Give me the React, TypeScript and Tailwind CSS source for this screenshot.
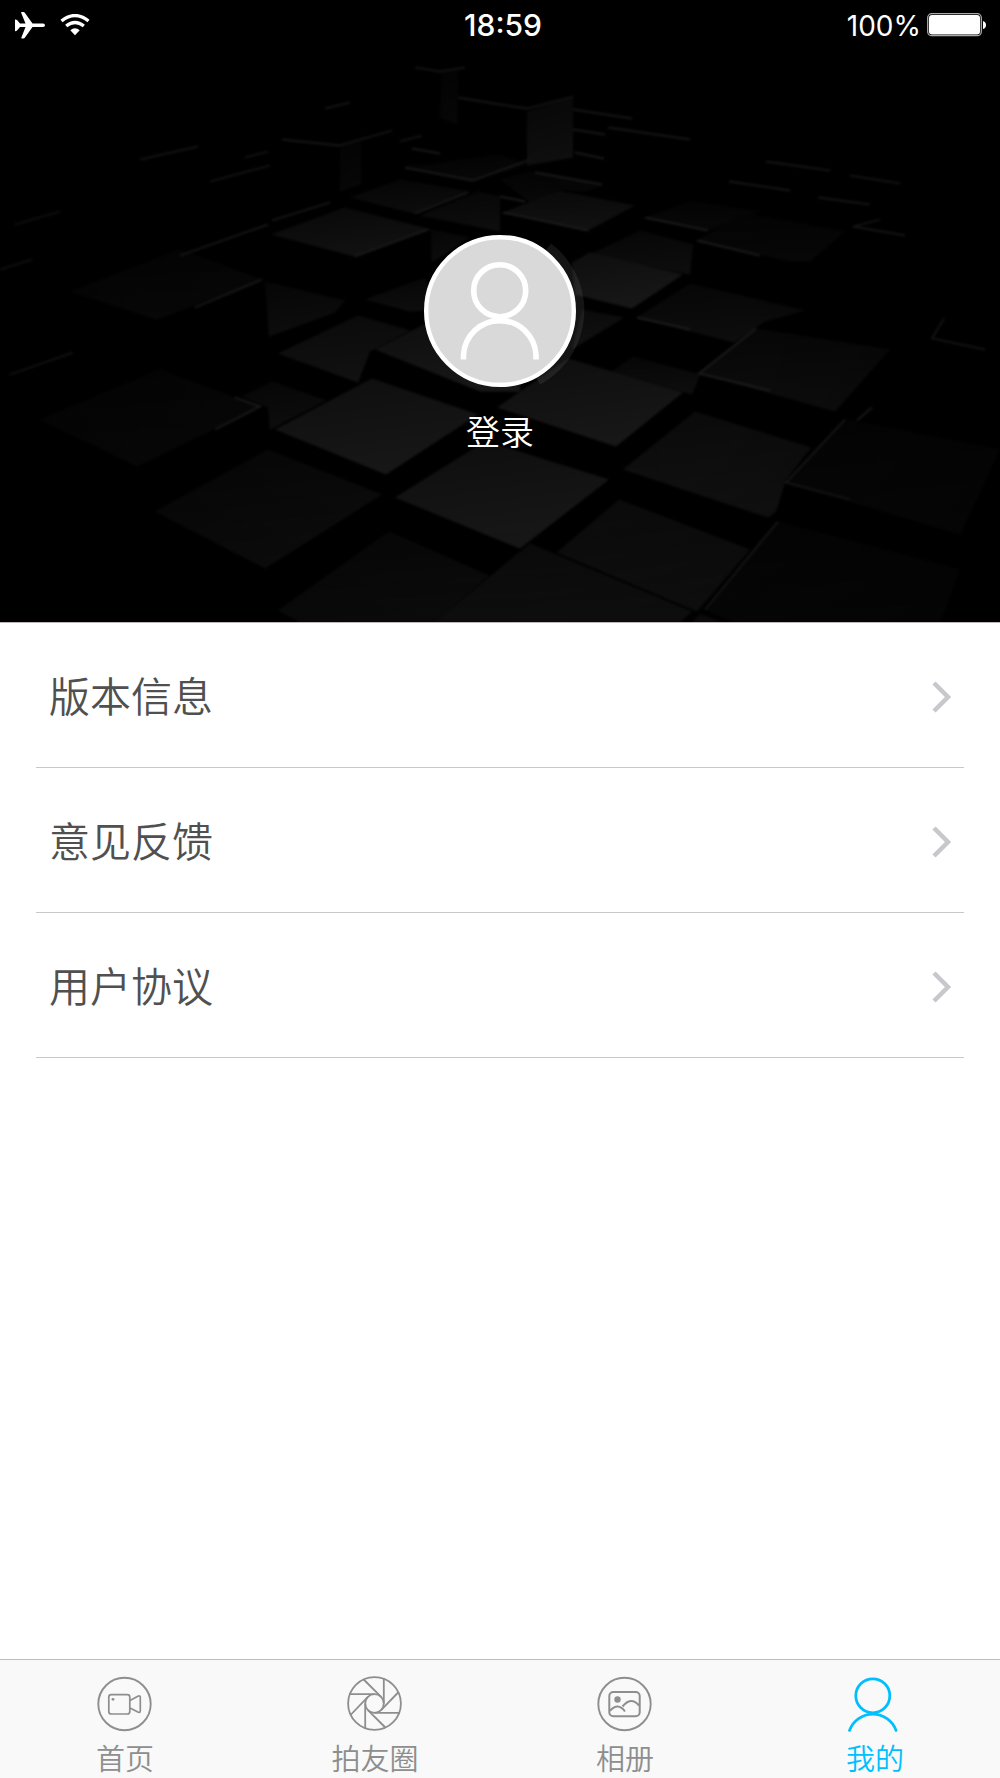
import React, { useState } from 'react';

type TabId = 'home' | 'circle' | 'album' | 'mine';

// Top faces of the blocks behind the avatar: points and tone
const tiles: [string, string][] = [
  ['160,370 260,407 137,467 40,420', 'faint'],
  ['268,450 382,495 265,569 155,512', 'dim'],
  ['372,379 478,415 386,475 275,430', 'bright'],
  ['358,316 410,331 370,352 358,383 278,354', 'mid'],
  ['375,350 424,325 520,325 520,392 480,392', 'bright'],
  ['272,382 326,401 270,430 268,408 242,397', 'dim'],
  ['389,532 489,576 434,623 300,623 278,611', 'dim'],
  ['480,445 500,446 609,480 520,549 395,498', 'bright'],
  ['265,282 345,301 335,313 269,337', 'dim'],
  ['345,208 431,230 355,257 271,235', 'mid'],
  ['180,250 262,280 157,320 70,292', 'faint'],
  ['400,180 470,192 415,214 350,198', 'dim'],
  ['430,165 500,155 527,165 473,181 405,166', 'faint'],
  ['478,192 500,197 500,232 420,216', 'dim'],
  ['365,300 425,278 440,310 410,312', 'dim'],
  ['431,230 470,238 432,263', 'dim'],
  ['527,112 573,97 573,158 527,166', 'mid'],
  ['440,118 442,70 458,68 457,125', 'faint'],
  ['340,146 361,142 361,185 340,192', 'faint'],
  ['500,180 530,172 603,186 585,192 558,190 530,203', 'faint'],
  ['558,191 635,206 588,231 503,213', 'mid'],
  ['645,218 690,202 760,212 708,231', 'faint'],
  ['640,231 693,245 690,275 590,255', 'dim'],
  ['590,253 683,275 632,309 575,295 572,263', 'bright'],
  ['697,241 745,214 845,232 810,262 790,262', 'faint'],
  ['690,284 805,311 765,322 734,343 637,318', 'dim'],
  ['756,329 890,350 835,412 699,374', 'dim'],
  ['633,357 700,375 692,395 612,372', 'dim'],
  ['568,359 683,393 616,447 497,408', 'bright'],
  ['695,412 811,448 786,480 776,512 768,518 623,470', 'mid'],
  ['845,420 1000,450 960,535 786,483', 'faint'],
  ['619,500 750,550 697,612 557,553', 'mid'],
  ['530,544 692,612 680,623 434,623', 'mid'],
  ['778,522 960,570 940,623 735,623 705,610', 'faint'],
  ['582,310 624,318 572,350', 'mid'],
  ['700,614 722,623 692,623', 'mid'],
];

// Lit rims of the blocks
const edges = [
  'M415 68 440 72 465 68',
  'M282 140 339 146 392 131',
  'M140 160 198 147',
  'M210 182 270 166',
  'M245 158 268 152',
  'M325 109 350 103',
  'M15 225 60 212',
  'M0 270 32 260',
  'M10 375 73 353',
  'M180 256 268 225',
  'M272 221 330 203',
  'M195 308 262 280',
  'M215 430 260 407 235 398',
  'M355 257 428 230',
  'M415 214 468 193',
  'M405 168 473 181 500 171 530 160',
  'M400 142 422 136',
  'M412 149 440 154',
  'M458 98 500 105 527 109 573 97',
  'M573 130 605 135',
  'M573 110 632 119',
  'M608 128 690 140',
  'M575 153 604 159',
  'M535 173 602 185',
  'M500 197 525 202',
  'M503 213 588 231',
  'M645 218 708 231',
  'M697 241 760 256',
  'M729 182 790 191',
  'M766 162 830 171',
  'M818 198 870 205',
  'M850 176 900 184',
  'M880 220 853 227 905 236',
  'M944 319 932 339 985 350',
  'M637 318 690 330',
  'M756 329 699 374 770 391',
  'M845 420 786 483 850 500',
  'M778 522 705 610',
  'M872 408 857 421',
];

const BlocksBackdrop = () => (
  <svg
    className="absolute inset-0 h-full w-full"
    viewBox="0 0 1000 623"
    preserveAspectRatio="xMidYMid slice"
    aria-hidden="true"
  >
    <defs>
      <linearGradient id="bright" x1="0" y1="0" x2="0.3" y2="1">
        <stop offset="0" stopColor="#0e0e0e" />
        <stop offset="1" stopColor="#171717" />
      </linearGradient>
      <linearGradient id="mid" x1="0" y1="0" x2="0.2" y2="1">
        <stop offset="0" stopColor="#0a0a0a" />
        <stop offset="1" stopColor="#111" />
      </linearGradient>
      <linearGradient id="dim" x1="0" y1="0" x2="0.2" y2="1">
        <stop offset="0" stopColor="#060606" />
        <stop offset="1" stopColor="#0d0d0d" />
      </linearGradient>
      <linearGradient id="faint" x1="0" y1="0" x2="0.2" y2="1">
        <stop offset="0" stopColor="#040404" />
        <stop offset="1" stopColor="#080808" />
      </linearGradient>
      <radialGradient id="vignette" cx="0.5" cy="0.6" r="0.6">
        <stop offset="0.4" stopColor="#000" stopOpacity="0" />
        <stop offset="1" stopColor="#000" stopOpacity="0.5" />
      </radialGradient>
      <filter id="soft" colorInterpolationFilters="sRGB">
        <feGaussianBlur stdDeviation="0.8" />
      </filter>
    </defs>
    <g filter="url(#soft)">
      {tiles.map(([points, tone]) => (
        <polygon key={points} points={points} fill={`url(#${tone})`} />
      ))}
      {edges.map((d) => (
        <path key={d} d={d} fill="none" stroke="#1c1c1c" strokeWidth="1.8" />
      ))}
    </g>
    <rect width="1000" height="623" fill="url(#vignette)" />
    <path d="M500 311 551 244A84 84 0 0 1 540 385Z" fill="#fff" fillOpacity="0.08" />
  </svg>
);

const PlaneIcon = () => (
  <svg width="30" height="27" viewBox="0 0 30 27" fill="#fff" aria-hidden="true">
    <path d="M6 .5Q6 0 7 0H8.500Q9.300 0 9.800 .8L17.500 11.400H28Q30 11.600 30 13.300T28 15.100H17.500L9.800 25.800Q9.300 26.500 8.500 26.500H7Q6 26.500 6.300 25.700L10.500 14.900H5L2 18.600Q.9 19.400 0 19V7.600Q.9 7.200 2 8L5 11.600H10.500Z" />
  </svg>
);

const WifiIcon = () => (
  <svg width="30" height="22" viewBox="0 0 30 22" fill="none" stroke="#fff" aria-hidden="true">
    <path d="M1.500 7Q15 -3.800 28.500 7" strokeWidth="3.400" />
    <path d="M6.200 12Q15 4.800 23.800 12" strokeWidth="3.400" />
    <path d="M10.300 16.300Q15 12.300 19.700 16.300L15 21.300Z" fill="#fff" stroke="none" />
  </svg>
);

const BatteryIcon = () => (
  <svg width="60" height="24" viewBox="0 0 60 24" aria-hidden="true">
    <rect x=".7" y=".7" width="53.600" height="22" rx="4" fill="none" stroke="#aaa" strokeWidth="1.300" />
    <rect x="2" y="2" width="51" height="19.500" rx="3" fill="#fff" />
    <path d="M56 8Q59 9 59 12T56 16Z" fill="#fff" />
  </svg>
);

const HomeIcon = () => (
  <svg width="56" height="56" viewBox="0 0 56 56" fill="none" stroke="currentColor" aria-hidden="true">
    <circle cx="27.500" cy="28" r="26.200" strokeWidth="1.900" />
    <rect x="11.800" y="18.600" width="21" height="19.400" rx="2.500" strokeWidth="1.700" />
    <path d="M33 24.500 40.800 20.300Q43.300 19.200 43.300 21.300V34.700Q43.300 37.200 40.800 36L33 32" strokeWidth="1.700" />
    <circle cx="16" cy="23.300" r="1.400" fill="currentColor" stroke="none" />
  </svg>
);

const ApertureIcon = () => (
  <svg width="56" height="56" viewBox="0 0 56 56" fill="none" stroke="currentColor" strokeWidth="1.800" aria-hidden="true">
    <circle cx="27.500" cy="27.500" r="26.400" />
    <circle cx="27.500" cy="27.500" r="9.300" />
    <path d="M36.800 27.500V2.800M34.100 34.100 51.100 16.500M27.500 36.800H52M20.900 34.100 38.300 51.500M18.200 27.500V52.200M20.900 20.900 4 38.500M27.500 18.200H3M34.100 20.900 16.700 3.500" />
  </svg>
);

const AlbumIcon = () => (
  <svg width="56" height="56" viewBox="0 0 56 56" fill="none" stroke="currentColor" aria-hidden="true">
    <circle cx="27.500" cy="28" r="26.200" strokeWidth="1.900" />
    <rect x="12.300" y="16" width="30.400" height="24.300" rx="4" strokeWidth="2" />
    <circle cx="20.500" cy="23.500" r="3.200" fill="currentColor" stroke="none" />
    <path d="M13 34.800Q21 26 28 35.500M25.500 30.500Q34 20 42 29.500" strokeWidth="2" />
  </svg>
);

const MineIcon = () => (
  <svg width="56" height="56" viewBox="0 0 56 56" fill="none" stroke="currentColor" strokeWidth="2.800" strokeLinecap="round" aria-hidden="true">
    <circle cx="25.800" cy="19.800" r="17" />
    <path d="M2.500 54.400A24.800 24.800 0 0 1 49.100 54.400" />
  </svg>
);

const menu = ['版本信息', '意见反馈', '用户协议'];

const tabs: { id: TabId; label: string; icon: React.FC }[] = [
  { id: 'home', label: '首页', icon: HomeIcon },
  { id: 'circle', label: '拍友圈', icon: ApertureIcon },
  { id: 'album', label: '相册', icon: AlbumIcon },
  { id: 'mine', label: '我的', icon: MineIcon },
];

export default function App() {
  const [active, setActive] = useState<TabId>('mine');

  return (
    <div className="flex min-h-screen flex-col bg-white font-['Noto_Sans_CJK_SC',sans-serif]">
      <header className="relative border-b border-[#bdb9ba] bg-black pb-[167px] text-white">
        <BlocksBackdrop />
        <div className="relative grid h-12 grid-cols-3 items-center pr-[13px] pl-[15px] font-['Inter',sans-serif] text-[28px] leading-12">
          <div className="flex items-center gap-[15px]">
            <PlaneIcon />
            <WifiIcon />
          </div>
          <time className="pl-1 text-center text-[30px] font-medium">18:59</time>
          <div className="flex items-center justify-end gap-1.5">
            <span className="pt-0.5">100%</span>
            <BatteryIcon />
          </div>
        </div>

        <button type="button" className="relative mx-auto mt-[187px] flex flex-col items-center gap-5">
          <svg width="152" height="152" viewBox="0 0 152 152" fill="none" stroke="#fff" aria-hidden="true">
            <circle cx="76" cy="76" r="73.800" fill="#d9d9d9" strokeWidth="4.400" />
            <circle cx="75.700" cy="55.700" r="26" strokeWidth="5.600" />
            <path d="M39.500 124.500V120A36.300 36.300 0 0 1 112 120V124.500" strokeWidth="5.600" />
          </svg>
          <span className="text-[34px] leading-12 font-[350]">登录</span>
        </button>
      </header>

      <main className="flex-1 px-9">
        <ul>
          {menu.map((label) => (
            <li key={label} className="border-b border-[#c8c8c8]">
              <a href="#" className="flex h-36 items-center justify-between pt-1 pr-3 pl-[13px] text-[41px] font-[350] text-[#505050]">
                <span className="pb-1">{label}</span>
                <svg width="20" height="32" viewBox="0 0 20 32" fill="none" stroke="#c7c7cc" strokeWidth="4.500" aria-hidden="true">
                  <path d="M2 2 16 16 2 30" />
                </svg>
              </a>
            </li>
          ))}
        </ul>
      </main>

      <nav className="grid grid-cols-4 border-t border-[#bdbdbd] bg-[#f9f9f9] pt-4">
        {tabs.map(({ id, label, icon: Icon }) => (
          <button
            key={id}
            type="button"
            onClick={() => setActive(id)}
            className={`flex flex-col items-center gap-1 ${active === id ? 'text-[#00bfff]' : 'text-[#8e8e8e]'}`}
          >
            <Icon />
            <span className="text-[29px] leading-[42px] font-[350]">{label}</span>
          </button>
        ))}
      </nav>
    </div>
  );
}
